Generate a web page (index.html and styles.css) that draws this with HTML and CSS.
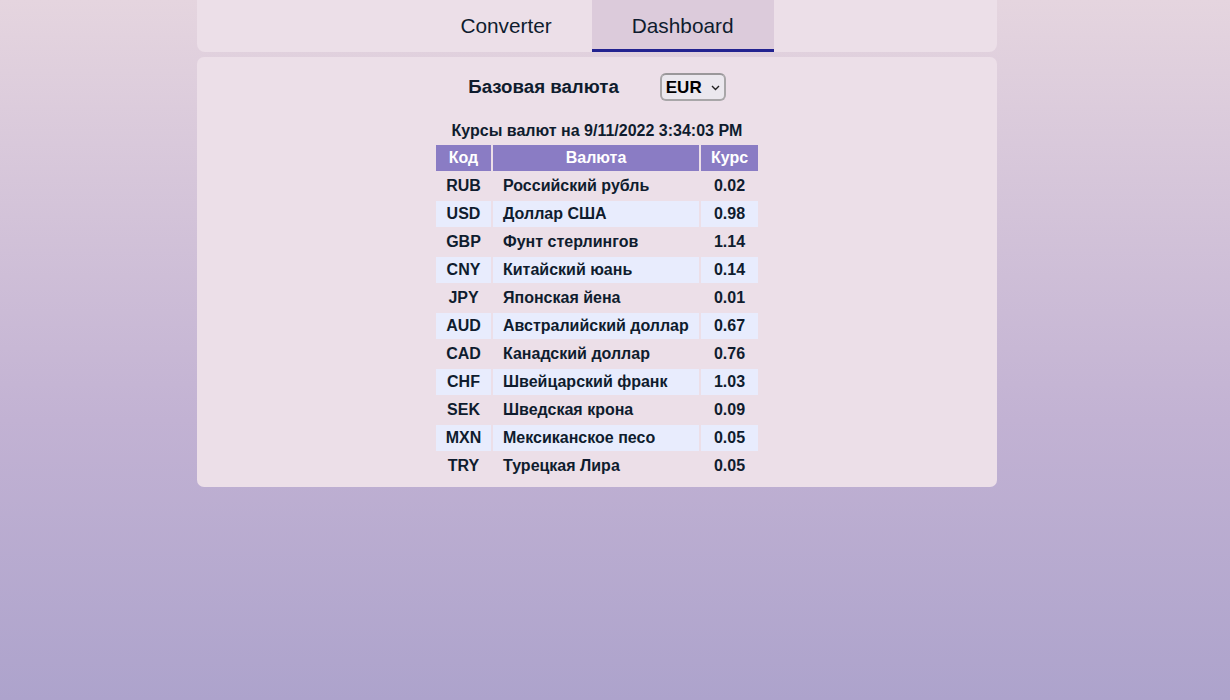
FILE: index.html
```html
<!DOCTYPE html>
<html lang="ru">
<head>
<meta charset="utf-8">
<title>Dashboard</title>
<link rel="stylesheet" href="styles.css">
</head>
<body>
<div class="page">
  <nav class="nav">
    <a class="tab">Converter</a>
    <a class="tab active">Dashboard</a>
  </nav>
  <main class="card">
    <div class="base-row">
      <label class="base-label" for="base">Базовая валюта</label>
      <div class="select-wrap">
        <select id="base" class="base-select">
          <option>EUR</option>
        </select>
        <svg class="chev" width="9" height="6" viewBox="0 0 9 6"><path d="M1 1l3.5 3.5L8 1" fill="none" stroke="#222" stroke-width="1.4"/></svg>
      </div>
    </div>
    <div class="caption">Курсы валют на 9/11/2022 3:34:03 PM</div>
    <table class="rates">
      <thead>
        <tr><th class="c-code">Код</th><th class="c-name">Валюта</th><th class="c-rate">Курс</th></tr>
      </thead>
      <tbody>
        <tr><td class="c-code">RUB</td><td class="c-name">Российский рубль</td><td class="c-rate">0.02</td></tr>
        <tr><td class="c-code">USD</td><td class="c-name">Доллар США</td><td class="c-rate">0.98</td></tr>
        <tr><td class="c-code">GBP</td><td class="c-name">Фунт стерлингов</td><td class="c-rate">1.14</td></tr>
        <tr><td class="c-code">CNY</td><td class="c-name">Китайский юань</td><td class="c-rate">0.14</td></tr>
        <tr><td class="c-code">JPY</td><td class="c-name">Японская йена</td><td class="c-rate">0.01</td></tr>
        <tr><td class="c-code">AUD</td><td class="c-name">Австралийский доллар</td><td class="c-rate">0.67</td></tr>
        <tr><td class="c-code">CAD</td><td class="c-name">Канадский доллар</td><td class="c-rate">0.76</td></tr>
        <tr><td class="c-code">CHF</td><td class="c-name">Швейцарский франк</td><td class="c-rate">1.03</td></tr>
        <tr><td class="c-code">SEK</td><td class="c-name">Шведская крона</td><td class="c-rate">0.09</td></tr>
        <tr><td class="c-code">MXN</td><td class="c-name">Мексиканское песо</td><td class="c-rate">0.05</td></tr>
        <tr><td class="c-code">TRY</td><td class="c-name">Турецкая Лира</td><td class="c-rate">0.05</td></tr>
      </tbody>
    </table>
  </main>
</div>
</body>
</html>
```
FILE: styles.css
```css
html, body {
  margin: 0;
  padding: 0;
  height: 100%;
}
body {
  background: linear-gradient(to bottom, #e5d5df 0%, #c2b2d3 60%, #ada3cc 100%);
  font-family: "Liberation Sans", Arial, sans-serif;
  color: #0f1c2e;
  padding-right: 36px;
  box-sizing: border-box;
}
.page {
  width: 800px;
  margin: 0 auto;
  display: flex;
  flex-direction: column;
  gap: 5px;
}
.nav {
  height: 52px;
  background: #ecdfe8;
  border-radius: 0 0 8px 8px;
  display: flex;
  justify-content: center;
  align-items: stretch;
}
.tab {
  box-sizing: border-box;
  padding: 2px 40px 0;
  font-size: 20.8px;
  line-height: 47px;
  color: #0f1c2e;
  border-bottom: 3px solid transparent;
  cursor: pointer;
}
.tab.active {
  background: #dccbdb;
  border-bottom-color: #232390;
}
.card {
  background: #ecdfe8;
  border-radius: 7px;
  padding: 16px 0 6px;
  display: flex;
  flex-direction: column;
  align-items: center;
}
.base-row {
  display: flex;
  align-items: center;
  gap: 41px;
  height: 28px;
}
.base-label {
  font-size: 18.7px;
  font-weight: bold;
}
.select-wrap {
  position: relative;
  display: flex;
}
.base-select {
  appearance: none;
  -webkit-appearance: none;
  height: 28px;
  width: 66px;
  box-sizing: border-box;
  font-family: "Liberation Sans", Arial, sans-serif;
  font-size: 17px;
  font-weight: bold;
  color: #000;
  background: #ebe8ee;
  border: 2px solid #a8a6a8;
  border-top-color: #9a989a;
  border-radius: 6px;
  padding: 0 0 0 4px;
}
.chev {
  position: absolute;
  right: 6px;
  top: 12px;
  pointer-events: none;
}
.caption {
  margin-top: 19px;
  margin-bottom: 2px;
  font-size: 16px;
  font-weight: bold;
  line-height: 21px;
}
.rates {
  border-collapse: separate;
  border-spacing: 2px;
  font-size: 16px;
  font-weight: bold;
}
.rates th, .rates td {
  height: 26px;
  padding: 0;
  box-sizing: border-box;
}
.rates th {
  background: #8a7cc4;
  color: #fff;
  text-align: center;
}
.rates tbody tr:nth-child(even) td {
  background: #e8ecfd;
}
.c-code {
  width: 55px;
  text-align: center;
}
.c-name {
  width: 206px;
}
td.c-name {
  text-align: left;
  padding-left: 10px;
}
.c-rate {
  width: 57px;
  text-align: center;
}
```
